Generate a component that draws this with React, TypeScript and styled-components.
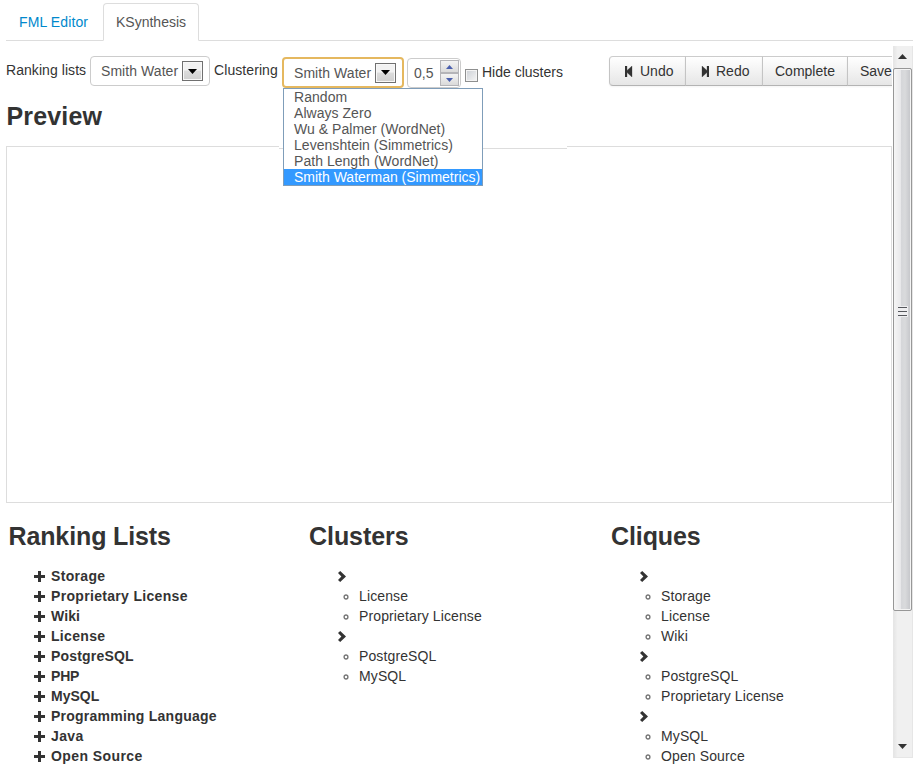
import React from "react";
import styled, { createGlobalStyle } from "styled-components";

const GlobalStyle = createGlobalStyle`
  * { box-sizing: border-box; }
  body {
    margin: 0;
    background: #fff;
    color: #333;
    font: 14px/20px "Liberation Sans", Arial, sans-serif;
    overflow: hidden;
  }
  ul { margin: 0; padding: 0; list-style: none; }
`;

const Page = styled.div`
  width: 918px;
  height: 771px;
  padding-left: 6px;
  overflow: hidden;
`;

const Tabs = styled.nav`
  display: flex;
  align-items: flex-end;
  width: 907px;
  height: 41px;
  border-bottom: 1px solid #ddd;
`;

const Tab = styled.a<{ $active?: boolean }>`
  height: 38px;
  width: ${(p) => (p.$active ? 96 : 95)}px;
  margin: 0 ${(p) => (p.$active ? 0 : 2)}px -1px 0;
  padding: 8px 0 0 12px;
  border: 1px solid ${(p) => (p.$active ? "#ddd" : "transparent")};
  border-bottom-color: ${(p) => (p.$active ? "#fff" : "#ddd")};
  border-radius: 4px 4px 0 0;
  background: ${(p) => (p.$active ? "#fff" : "transparent")};
  color: ${(p) => (p.$active ? "#555" : "#08c")};
  letter-spacing: ${(p) => (p.$active ? 0 : 0.12)}px;
  white-space: nowrap;
`;

const Workspace = styled.div`
  display: flex;
  height: 730px;
`;

const Content = styled.main`
  width: 886px;
  overflow: hidden;
`;

const Toolbar = styled.div`
  display: flex;
  align-items: flex-start;
  width: 960px;
  height: 55px;
  padding-top: 15px;
`;

const Label = styled.label<{ $width: number; $top?: number; $spacing?: number }>`
  width: ${(p) => p.$width}px;
  flex: none;
  padding-top: ${(p) => p.$top ?? 4}px;
  letter-spacing: ${(p) => p.$spacing ?? 0}px;
  white-space: nowrap;
`;

const SelectBox = styled.div<{ $focus?: boolean }>`
  position: relative;
  display: flex;
  flex: none;
  align-items: center;
  width: ${(p) => (p.$focus ? 122 : 120)}px;
  height: ${(p) => (p.$focus ? 31 : 30)}px;
  margin: ${(p) => (p.$focus ? "1px 3px 0 0" : "0 4px 0 0")};
  padding-left: 10px;
  border: ${(p) => (p.$focus ? "2px solid #e5b85f" : "1px solid #ccc")};
  border-radius: 4px;
  color: #555;
`;

const SelectValue = styled.span`
  width: 81px;
  letter-spacing: 0.06px;
  white-space: nowrap;
`;

const SelectArrow = styled.span`
  display: flex;
  align-items: center;
  justify-content: center;
  width: 21px;
  height: 20px;
  border: 1px solid #707070;
  box-shadow: inset 0 0 0 1px #f8f8f8;
  background: linear-gradient(#f2f2f2 45%, #dcdcdc 50%, #cfcfcf);
`;

const Options = styled.ul`
  position: absolute;
  left: -1px;
  top: 29px;
  z-index: 2;
  width: 200px;
  height: 98px;
  border: 1px solid #7f9db9;
  background: #fff;
`;

const Option = styled.li<{ $selected?: boolean }>`
  height: 16px;
  padding-left: 10px;
  line-height: 16px;
  letter-spacing: ${(p) => (p.$selected ? 0 : 0.04)}px;
  background: ${(p) => (p.$selected ? "#3399ff" : "transparent")};
  color: ${(p) => (p.$selected ? "#fff" : "#555")};
  white-space: nowrap;
`;

const NumberBox = styled.div`
  display: flex;
  flex: none;
  justify-content: space-between;
  width: 54px;
  height: 30px;
  margin: 2px 4px 0 0;
  padding: 1px 1px 0 6px;
  border: 1px solid #ccc;
  border-radius: 4px;
  color: #555;
  line-height: 26px;
`;

const Spinner = styled.span`
  display: flex;
  flex-direction: column;
`;

const SpinButton = styled.span`
  display: flex;
  align-items: center;
  justify-content: center;
  width: 19px;
  height: 13px;
  border: 1px solid #b4b4b8;
  background: linear-gradient(#f3f3f3, #dadada);
`;

const Checkbox = styled.span`
  width: 13px;
  height: 13px;
  flex: none;
  margin: 13px 4px 0 0;
  border: 1px solid #8e8f8f;
  box-shadow: inset 0 0 0 1px #f4f4f4;
  background: linear-gradient(135deg, #cbcfd5, #f6f6f6);
`;

const ButtonGroup = styled.div`
  display: flex;
  flex: none;
`;

const Button = styled.button<{ $width: number; $pad: number }>`
  display: flex;
  align-items: center;
  width: ${(p) => p.$width}px;
  height: 30px;
  padding: 0 0 0 ${(p) => p.$pad}px;
  border: 1px solid #ccc;
  border-color: #ccc transparent #b3b3b3 #c4c4c4;
  border-right: 0;
  background: linear-gradient(#fff, #e6e6e6);
  box-shadow: 0 1px 2px rgba(0, 0, 0, 0.05);
  color: #333;
  font: inherit;
  white-space: nowrap;
  &:first-child { border-radius: 4px 0 0 4px; }
  svg { margin-right: 7px; }
`;

const Heading = styled.h2<{ $left?: number; $spacing?: number }>`
  margin: 0;
  padding-left: ${(p) => p.$left ?? 0}px;
  font-size: 25px;
  line-height: 40px;
  letter-spacing: ${(p) => p.$spacing ?? 0}px;
`;

const PreviewPane = styled.section`
  position: relative;
  width: 886px;
  height: 357px;
  margin-top: 10px;
  border: 1px solid #ddd;
`;

const PreviewSeam = styled.div`
  position: absolute;
  left: 272px;
  top: -1px;
  width: 288px;
  height: 3px;
  border-bottom: 1px solid #ddd;
  background: #fff;
`;

const Columns = styled.div`
  display: grid;
  grid-template-columns: 300px 302px 284px;
  padding-top: 13px;
`;

const ItemList = styled.ul`
  padding-top: 10px;
`;

const RankingItem = styled.li<{ $spacing: number }>`
  display: flex;
  align-items: center;
  gap: 6px;
  height: 20px;
  padding-left: 28px;
  font-weight: bold;
  letter-spacing: ${(p) => p.$spacing}px;
`;

const GroupMarker = styled.li`
  display: flex;
  align-items: center;
  height: 20px;
  padding-left: 32px;
`;

const GroupItem = styled.li`
  display: flex;
  align-items: center;
  height: 20px;
  padding-left: 37px;
  letter-spacing: 0.12px;
  svg { margin: 1px 10px 0 0; }
`;

const Scrollbar = styled.aside`
  display: flex;
  flex-direction: column;
  width: 20px;
  height: 712px;
  margin: 5px 0 0 1px;
  border: 1px solid #e6e6e6;
  border-top: 0;
  background: linear-gradient(90deg, #e6e6e6, #f0f0f0 20%, #f0f0f0);
`;

const ScrollButton = styled.span`
  display: flex;
  align-items: center;
  justify-content: center;
  width: 17px;
  height: 22px;
`;

const Thumb = styled.span`
  display: flex;
  align-items: center;
  justify-content: center;
  width: 19px;
  height: 544px;
  margin: 0 0 124px -1px;
  border: 1px solid #979797;
  border-radius: 2px;
  box-shadow: inset 0 0 0 1px #f4f4f4;
  background: linear-gradient(90deg, #f5f5f5 0, #e9e9eb 38%, #d5d6d9 42%, #d9dadc 65%, #c3c4c8 100%);
  svg { margin-top: -56px; }
`;

const Arrow = ({ up, fill, width = 9, height = 5 }: { up?: boolean; fill: string; width?: number; height?: number }) => (
  <svg width={width} height={height} viewBox="0 0 10 5" preserveAspectRatio="none">
    <path d={up ? "M0 5L5 0L10 5Z" : "M0 0H10L5 5Z"} fill={fill} />
  </svg>
);

const StepIcon = ({ forward }: { forward?: boolean }) => (
  <svg width="8" height="11" viewBox="0 0 8 11">
    <path
      d={forward ? "M1 0L6 4.4V0H8V11H6V6.6L1 11Z" : "M7 0L2 4.4V0H0V11H2V6.6L7 11Z"}
      fill="#333"
      stroke="#333"
      strokeWidth="0.3"
    />
  </svg>
);

const Plus = () => (
  <svg width="11" height="11" viewBox="0 0 11 11">
    <path d="M4 0H7V4H11V7H7V11H4V7H0V4H4Z" fill="#333" />
  </svg>
);

const Chevron = () => (
  <svg width="8" height="11" viewBox="0 0 8 11">
    <path d="M2.2 0L8 5.5L2.2 11L0 8.9L3.4 5.5L0 2.1Z" fill="#333" />
  </svg>
);

const Ring = () => (
  <svg width="6" height="6" viewBox="0 0 6 6">
    <ellipse cx="3" cy="3" rx="1.9" ry="2" fill="none" stroke="#777" strokeWidth="1.4" />
  </svg>
);

const Grip = () => (
  <svg width="10" height="11" viewBox="0 0 10 11" shapeRendering="crispEdges">
    <path d="M0 0H10V11H0Z" fill="#eeeef0" />
    <path d="M0 1H9V2H0ZM0 5H9V6H0ZM0 9H9V10H0Z" fill="#55575c" />
  </svg>
);

const options = [
  "Random",
  "Always Zero",
  "Wu & Palmer (WordNet)",
  "Levenshtein (Simmetrics)",
  "Path Length (WordNet)",
  "Smith Waterman (Simmetrics)",
];

const rankings = [
  { name: "Storage", spacing: 0.32 },
  { name: "Proprietary License", spacing: 0.32 },
  { name: "Wiki", spacing: 0.1 },
  { name: "License", spacing: 0.32 },
  { name: "PostgreSQL", spacing: 0.18 },
  { name: "PHP", spacing: -0.2 },
  { name: "MySQL", spacing: 0 },
  { name: "Programming Language", spacing: 0.24 },
  { name: "Java", spacing: 0.4 },
  { name: "Open Source", spacing: 0.42 },
];

const clusters = [["License", "Proprietary License"], ["PostgreSQL", "MySQL"]];
const cliques = [
  ["Storage", "License", "Wiki"],
  ["PostgreSQL", "Proprietary License"],
  ["MySQL", "Open Source"],
];

const Groups = ({ groups }: { groups: string[][] }) => (
  <ItemList>
    {groups.map((group, i) => (
      <React.Fragment key={i}>
        <GroupMarker><Chevron /></GroupMarker>
        {group.map((name) => (
          <GroupItem key={name}><Ring />{name}</GroupItem>
        ))}
      </React.Fragment>
    ))}
  </ItemList>
);

export default function App() {
  return (
    <Page>
      <GlobalStyle />
      <Tabs>
        <Tab>FML Editor</Tab>
        <Tab $active>KSynthesis</Tab>
      </Tabs>
      <Workspace>
        <Content>
          <Toolbar>
            <Label $width={84} $spacing={0.06}>Ranking lists</Label>
            <SelectBox>
              <SelectValue>Smith Water</SelectValue>
              <SelectArrow><Arrow fill="#000" /></SelectArrow>
            </SelectBox>
            <Label $width={68} $spacing={0.08}>Clustering</Label>
            <SelectBox $focus>
              <SelectValue>Smith Water</SelectValue>
              <SelectArrow><Arrow fill="#000" /></SelectArrow>
              <Options>
                {options.map((name, i) => (
                  <Option key={name} $selected={i === options.length - 1}>{name}</Option>
                ))}
              </Options>
            </SelectBox>
            <NumberBox>
              0,5
              <Spinner>
                <SpinButton><Arrow up fill="#4a5fae" width={7} height={4} /></SpinButton>
                <SpinButton><Arrow fill="#4a5fae" width={7} height={4} /></SpinButton>
              </Spinner>
            </NumberBox>
            <Checkbox />
            <Label $width={127} $top={6}>Hide clusters</Label>
            <ButtonGroup>
              <Button $width={76} $pad={15}><StepIcon />Undo</Button>
              <Button $width={77} $pad={15}><StepIcon forward />Redo</Button>
              <Button $width={85} $pad={12}>Complete</Button>
              <Button $width={70} $pad={12}>Save</Button>
            </ButtonGroup>
          </Toolbar>
          <Heading $left={0.5} $spacing={0.15}>Preview</Heading>
          <PreviewPane><PreviewSeam /></PreviewPane>
          <Columns>
            <section>
              <Heading $left={2.5} $spacing={-0.12}>Ranking Lists</Heading>
              <ItemList>
                {rankings.map(({ name, spacing }) => (
                  <RankingItem key={name} $spacing={spacing}><Plus />{name}</RankingItem>
                ))}
              </ItemList>
            </section>
            <section>
              <Heading $left={3} $spacing={-0.05}>Clusters</Heading>
              <Groups groups={clusters} />
            </section>
            <section>
              <Heading $left={3} $spacing={-0.1}>Cliques</Heading>
              <Groups groups={cliques} />
            </section>
          </Columns>
        </Content>
        <Scrollbar>
          <ScrollButton><Arrow up fill="#333" /></ScrollButton>
          <Thumb><Grip /></Thumb>
          <ScrollButton><Arrow fill="#333" /></ScrollButton>
        </Scrollbar>
      </Workspace>
    </Page>
  );
}
